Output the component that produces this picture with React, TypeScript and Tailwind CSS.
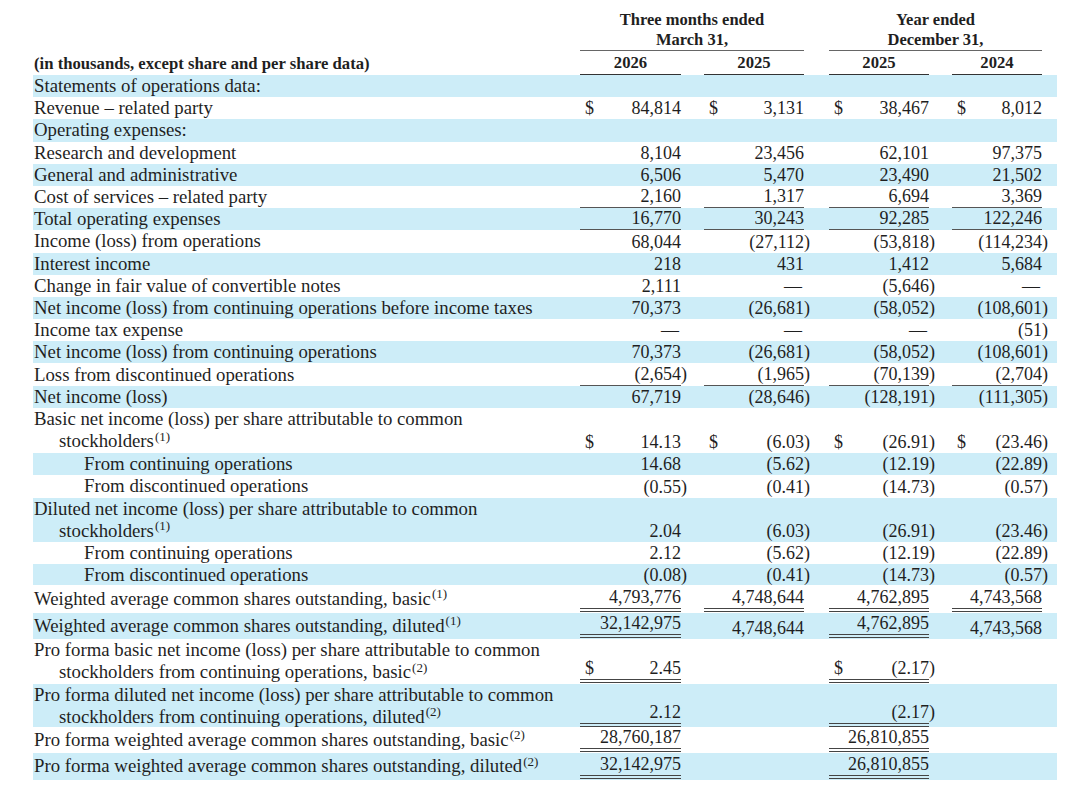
import React from "react";

type Cell = { v: string; d?: boolean; u?: 0 | 1 | 2 } | null;

type Row = {
  label: React.ReactNode[];
  h: string;
  blue?: boolean;
  indent?: boolean;
  cells?: Cell[];
};

const c = (v: string, u: 0 | 1 | 2 = 0, d = false): Cell => ({ v, u, d });

function Sup({ n }: { n: number }) {
  return <sup className="text-[13px] ml-[1px]">({n})</sup>;
}

const rows: Row[] = [
  { label: ["Statements of operations data:"], h: "h-[22.2px]", blue: true },
  { label: ["Revenue – related party"], h: "h-[22.2px]", cells: [c("84,814", 0, true), c("3,131", 0, true), c("38,467", 0, true), c("8,012", 0, true)] },
  { label: ["Operating expenses:"], h: "h-[22.2px]", blue: true },
  { label: ["Research and development"], h: "h-[22.2px]", cells: [c("8,104"), c("23,456"), c("62,101"), c("97,375")] },
  { label: ["General and administrative"], h: "h-[22.2px]", blue: true, cells: [c("6,506"), c("5,470"), c("23,490"), c("21,502")] },
  { label: ["Cost of services – related party"], h: "h-[22.2px]", cells: [c("2,160", 1), c("1,317", 1), c("6,694", 1), c("3,369", 1)] },
  { label: ["Total operating expenses"], h: "h-[22.2px]", blue: true, cells: [c("16,770", 1), c("30,243", 1), c("92,285", 1), c("122,246", 1)] },
  { label: ["Income (loss) from operations"], h: "h-[22.2px]", cells: [c("68,044"), c("(27,112)"), c("(53,818)"), c("(114,234)")] },
  { label: ["Interest income"], h: "h-[22.2px]", blue: true, cells: [c("218"), c("431"), c("1,412"), c("5,684")] },
  { label: ["Change in fair value of convertible notes"], h: "h-[22.2px]", cells: [c("2,111"), c("—"), c("(5,646)"), c("—")] },
  { label: ["Net income (loss) from continuing operations before income taxes"], h: "h-[22.2px]", blue: true, cells: [c("70,373"), c("(26,681)"), c("(58,052)"), c("(108,601)")] },
  { label: ["Income tax expense"], h: "h-[22.2px]", cells: [c("—"), c("—"), c("—"), c("(51)")] },
  { label: ["Net income (loss) from continuing operations"], h: "h-[22.2px]", blue: true, cells: [c("70,373"), c("(26,681)"), c("(58,052)"), c("(108,601)")] },
  { label: ["Loss from discontinued operations"], h: "h-[22.2px]", cells: [c("(2,654)", 1), c("(1,965)", 1), c("(70,139)", 1), c("(2,704)", 1)] },
  { label: ["Net income (loss)"], h: "h-[22.2px]", blue: true, cells: [c("67,719"), c("(28,646)"), c("(128,191)"), c("(111,305)")] },
  {
    label: ["Basic net income (loss) per share attributable to common", <>stockholders<Sup n={1} /></>],
    h: "h-[45px]",
    cells: [c("14.13", 0, true), c("(6.03)", 0, true), c("(26.91)", 0, true), c("(23.46)", 0, true)],
  },
  { label: ["From continuing operations"], indent: true, h: "h-[22px]", blue: true, cells: [c("14.68"), c("(5.62)"), c("(12.19)"), c("(22.89)")] },
  { label: ["From discontinued operations"], indent: true, h: "h-[23px]", cells: [c("(0.55)"), c("(0.41)"), c("(14.73)"), c("(0.57)")] },
  {
    label: ["Diluted net income (loss) per share attributable to common", <>stockholders<Sup n={1} /></>],
    h: "h-[44px]",
    blue: true,
    cells: [c("2.04"), c("(6.03)"), c("(26.91)"), c("(23.46)")],
  },
  { label: ["From continuing operations"], indent: true, h: "h-[22px]", cells: [c("2.12"), c("(5.62)"), c("(12.19)"), c("(22.89)")] },
  { label: ["From discontinued operations"], indent: true, h: "h-[21px]", blue: true, cells: [c("(0.08)"), c("(0.41)"), c("(14.73)"), c("(0.57)")] },
  {
    label: [<>Weighted average common shares outstanding, basic<Sup n={1} /></>],
    h: "h-[28px]",
    cells: [c("4,793,776", 2), c("4,748,644", 2), c("4,762,895", 2), c("4,743,568", 2)],
  },
  {
    label: [<>Weighted average common shares outstanding, diluted<Sup n={1} /></>],
    h: "h-[26px]",
    blue: true,
    cells: [c("32,142,975", 2), c("4,748,644"), c("4,762,895", 2), c("4,743,568")],
  },
  {
    label: ["Pro forma basic net income (loss) per share attributable to common", <>stockholders from continuing operations, basic<Sup n={2} /></>],
    h: "h-[45px]",
    cells: [c("2.45", 2, true), null, c("(2.17)", 2, true), null],
  },
  {
    label: ["Pro forma diluted net income (loss) per share attributable to common", <>stockholders from continuing operations, diluted<Sup n={2} /></>],
    h: "h-[43px]",
    blue: true,
    cells: [c("2.12", 2), null, c("(2.17)", 2), null],
  },
  {
    label: [<>Pro forma weighted average common shares outstanding, basic<Sup n={2} /></>],
    h: "h-[26px]",
    cells: [c("28,760,187", 2), null, c("26,810,855", 2), null],
  },
  {
    label: [<>Pro forma weighted average common shares outstanding, diluted<Sup n={2} /></>],
    h: "h-[27px]",
    blue: true,
    cells: [c("32,142,975", 2), null, c("26,810,855", 2), null],
  },
];

const GRID = "grid grid-cols-[547px_101px_23px_100px_25px_100px_23px_90px_15px]";

function Num({ v }: { v: string }) {
  if (v.endsWith(")")) {
    return (
      <span>
        {v.slice(0, -1)}
        <span className="mr-[-6px]">)</span>
      </span>
    );
  }
  if (v === "—") return <span className="pr-[2px]">—</span>;
  return <span>{v}</span>;
}

function ValueCell({ cell }: { cell: Cell }) {
  if (!cell) return <div />;
  const line =
    cell.u === 1
      ? "border-b border-[#555]"
      : cell.u === 2
      ? "border-b-4 border-double border-[#444] mb-[1px]"
      : "";
  return (
    <div className="flex flex-col justify-end">
      <div className={`flex justify-between leading-[21px] pl-[5px] ${line}`}>
        <span>{cell.d ? "$" : ""}</span>
        <Num v={cell.v} />
      </div>
    </div>
  );
}

function TableRow({ row }: { row: Row }) {
  const cells = row.cells ?? [null, null, null, null];
  return (
    <div className={`${GRID} ${row.h} ${row.blue ? "bg-[#cdedf8]" : ""}`}>
      <div className="flex flex-col justify-center text-[18.8px] leading-[22px] pl-[1px] whitespace-nowrap">
        {row.label.map((l, i) => (
          <div key={i} className={row.indent ? "pl-[50px]" : i > 0 ? "pl-[25px]" : ""}>
            {l}
          </div>
        ))}
      </div>
      <ValueCell cell={cells[0]} />
      <div />
      <ValueCell cell={cells[1]} />
      <div />
      <ValueCell cell={cells[2]} />
      <div />
      <ValueCell cell={cells[3]} />
      <div />
    </div>
  );
}

export default function App() {
  return (
    <div className="w-[1080px] h-[799px] bg-white overflow-hidden pt-[10px] pl-[33px] text-[#1f1f1f] text-[18px] font-['Liberation_Serif','Times_New_Roman',serif]">
      <div className="w-[1024px]">
        {/* column group headings */}
        <div className={`${GRID} font-bold text-[16.5px] leading-[20px]`}>
          <div />
          <div className="col-span-3 text-center border-b border-[#666]">
            Three months ended
            <br />
            March 31,
          </div>
          <div />
          <div className="col-span-3 text-center border-b border-[#666]">
            Year ended
            <br />
            December 31,
          </div>
          <div />
        </div>
        <div className={`${GRID} h-[24px] font-bold text-[16.7px] leading-[20px]`}>
          <div className="flex items-end pb-[1px] pl-[1px]">(in thousands, except share and per share data)</div>
          <div className="flex items-end justify-center border-b border-[#333] pb-[1px]">2026</div>
          <div />
          <div className="flex items-end justify-center border-b border-[#333] pb-[1px]">2025</div>
          <div />
          <div className="flex items-end justify-center border-b border-[#333] pb-[1px]">2025</div>
          <div />
          <div className="flex items-end justify-center border-b border-[#333] pb-[1px]">2024</div>
          <div />
        </div>

        {rows.map((r, i) => (
          <TableRow key={i} row={r} />
        ))}
      </div>
    </div>
  );
}
